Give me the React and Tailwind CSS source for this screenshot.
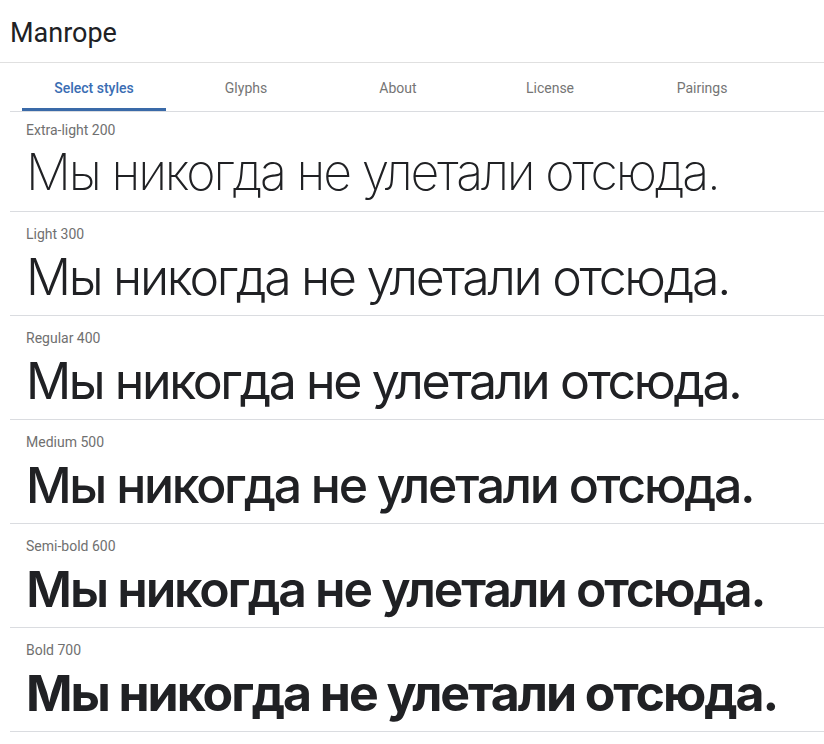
const tabs = ['Select styles', 'Glyphs', 'About', 'License', 'Pairings']

const styles = [
  { label: 'Extra-light 200', weight: 'font-extralight tracking-[-2.17px]' },
  { label: 'Light 300', weight: 'font-light tracking-[-2.3px]' },
  { label: 'Regular 400', weight: 'font-normal tracking-[-2.4px]' },
  { label: 'Medium 500', weight: 'font-medium tracking-[-2.27px]' },
  { label: 'Semi-bold 600', weight: 'font-semibold tracking-[-2.2px]' },
  { label: 'Bold 700', weight: 'font-bold tracking-[-2.07px]' },
]

const sample = 'Мы никогда не улетали отсюда.'

const App = () => {
  return (
    <div className="min-h-[744px] bg-white font-['Roboto',sans-serif]">
      <header className="h-[63px] pl-[10px] pt-[17px] border-b border-[#e0e0e0]">
        <h1 className="text-[27px] leading-[32px] text-[#202124]">Manrope</h1>
      </header>

      <div className="ml-[10px]">
        {/* Tabs */}
        <nav className="flex pl-[8px] border-b border-[#dadce0]">
          {tabs.map((tab, i) => (
            <div key={tab} className="w-[152px] h-[48px] flex flex-col">
              <div
                className={`flex-1 flex items-center justify-center text-[14px] pt-[5px] ${
                  i === 0 ? 'text-[#3a6db3] font-medium' : 'text-[#757575]'
                }`}
              >
                {tab}
              </div>
              <div className={`mx-1 h-[3px] ${i === 0 ? 'bg-[#3a6aa8]' : ''}`} />
            </div>
          ))}
        </nav>

        {/* Style rows */}
        {styles.map((s, i) => (
          <div
            key={s.label}
            className={`border-b border-[#dadce0] pl-[16px] ${i === 0 ? 'pt-[10px] pb-[14px]' : 'pt-[14px] pb-[13px]'}`}
          >
            <div className={`text-[14px] leading-4 text-[#707070] ${i === 0 ? 'mb-[9px]' : 'mb-[10px]'}`}>{s.label}</div>
            <div className={`font-['Inter',sans-serif] text-[50px] leading-[50px] text-[#202124] whitespace-nowrap ${s.weight}`}>
              {sample}
            </div>
          </div>
        ))}
      </div>
    </div>
  )
}

export default App
